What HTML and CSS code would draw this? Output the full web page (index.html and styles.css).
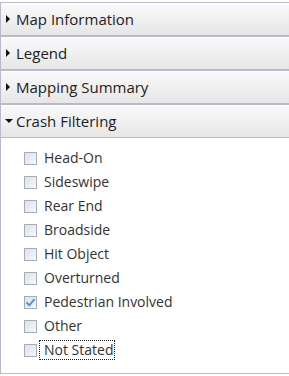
FILE: index.html
```html
<!DOCTYPE html>
<html lang="en">
<head>
  <meta charset="UTF-8">
  <title>Crash Map</title>
  <link rel="stylesheet" href="styles.css">
</head>
<body>

<div class="accordion">
  <div class="acc-header"><span class="arrow right"></span>Map Information</div>
  <div class="acc-header"><span class="arrow right"></span>Legend</div>
  <div class="acc-header"><span class="arrow right"></span>Mapping Summary</div>
  <div class="acc-header open"><span class="arrow down"></span>Crash Filtering</div>
  <div class="acc-content">
    <label class="item"><span class="box"></span><span class="txt">Head-On</span></label>
    <label class="item"><span class="box"></span><span class="txt">Sideswipe</span></label>
    <label class="item"><span class="box"></span><span class="txt">Rear End</span></label>
    <label class="item"><span class="box"></span><span class="txt">Broadside</span></label>
    <label class="item"><span class="box"></span><span class="txt">Hit Object</span></label>
    <label class="item"><span class="box"></span><span class="txt">Overturned</span></label>
    <label class="item"><span class="box checked">
      <svg width="11" height="11" viewBox="0 0 11 11"><path d="M1.5 5.5 L4.3 8.3 L9.5 2.2" fill="none" stroke="#5a8fd6" stroke-width="2"/></svg>
    </span><span class="txt">Pedestrian Involved</span></label>
    <label class="item"><span class="box"></span><span class="txt">Other</span></label>
    <label class="item"><span class="box"></span><span class="txt focus">Not Stated</span></label>
  </div>
</div>

</body>
</html>
```

FILE: styles.css
```css
body {
  margin: 0;
  padding: 2px 0 0 0;
  background: #fff;
  font-family: "Open Sans", Arial, sans-serif;
}
.accordion {
  width: 300px;
}
.acc-header {
  height: 32px;
  border: 1px solid #b7bbc9;
  background: linear-gradient(#fafafa, #e6e6e6);
  box-shadow: inset 0 1px 0 #fff;
  color: #222;
  font-size: 15px;
  padding-left: 5px;
  display: flex;
  align-items: center;
}
.arrow {
  width: 0;
  height: 0;
  margin-right: 6px;
}
.arrow.right {
  border-top: 4px solid transparent;
  border-bottom: 4px solid transparent;
  border-left: 4px solid #111;
}
.arrow.down {
  border-left: 4px solid transparent;
  border-right: 4px solid transparent;
  border-top: 4px solid #111;
  margin-left: -1px;
  margin-right: 3px;
}
.acc-content {
  border: 1px solid #b7bbc9;
  border-top: none;
  padding: 8px 0 11px 23px;
}
.item {
  display: flex;
  align-items: center;
  height: 24px;
  font-size: 14px;
  color: #333;
}
.box {
  width: 11px;
  height: 11px;
  border: 1px solid #a9abb5;
  background: linear-gradient(135deg, #d9e2ee, #f6f8fb);
  margin-right: 2px;
  display: flex;
  align-items: center;
  justify-content: center;
}
.txt {
  padding: 0 1px 0 4px;
  border: 1px dotted transparent;
  line-height: 18px;
}
.txt.focus {
  border-color: #222;
}
```
